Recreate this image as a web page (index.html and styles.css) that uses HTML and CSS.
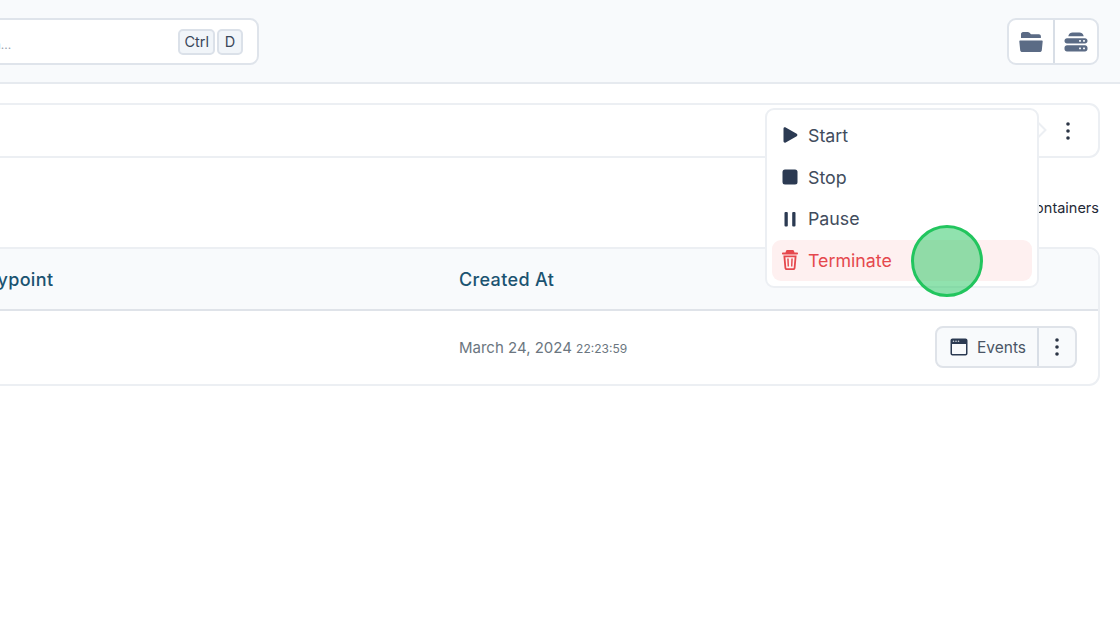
FILE: index.html
```html
<!DOCTYPE html>
<html lang="en">
<head>
<meta charset="utf-8">
<title>Containers</title>
<link rel="stylesheet" href="styles.css">
</head>
<body>
<div class="page">
  <header class="topbar">
    <div class="search">
      <span class="placeholder">Search...</span>
      <span class="keys"><kbd class="key">Ctrl</kbd><kbd class="key">D</kbd></span>
    </div>
    <div class="icon-group">
      <button class="icon-btn" aria-label="Files">
        <svg width="24" height="22" viewBox="0 0 24 22"><path class="slate" d="M2 3.200C2 2 2.900 1 4 1h4.800c.6 0 1.100.2 1.500.6l1.700 1.700h7.900c1.100 0 2 .9 2 2V7H2V3.200zM1 9.500h22c.4 0 .7.3.7.7l-.9 9c-.1 1.100-1 1.900-2.100 1.900H3.300c-1.100 0-2-.8-2.100-1.900l-.9-9c0-.4.300-.7.700-.7z"/></svg>
      </button>
      <button class="icon-btn" aria-label="Servers">
        <svg width="24" height="22" viewBox="0 0 24 22"><path class="slate" d="M4.500 4.500C5 2.700 6.700 1.500 8.500 1.500h7c1.800 0 3.500 1.200 4 3l.2.800H4.300l.2-.800zM3 7.200h18c1.400 0 2.500 1.100 2.500 2.500v.4c0 1.400-1.100 2.500-2.500 2.500H3C1.600 12.600.5 11.500.5 10.100v-.4C.5 8.300 1.600 7.200 3 7.200zM3 14.300h18c1.400 0 2.500 1.100 2.500 2.500v1.200c0 1.400-1.100 2.500-2.500 2.500H3C1.600 20.500.5 19.400.5 18v-1.200c0-1.400 1.100-2.500 2.500-2.500z"/><g class="holes"><rect x="15" y="9.100" width="2" height="1.700" rx=".5"/><rect x="19" y="9.100" width="2" height="1.700" rx=".5"/><rect x="15" y="16.600" width="2" height="1.700" rx=".5"/><rect x="19" y="16.600" width="2" height="1.700" rx=".5"/></g></svg>
      </button>
    </div>
  </header>

  <main class="content">
    <section class="toolbar-card">
      <button class="kebab" aria-label="More">
        <svg width="4" height="18" viewBox="0 0 4 18"><circle cx="2" cy="2" r="1.800"/><circle cx="2" cy="9" r="1.800"/><circle cx="2" cy="16" r="1.800"/></svg>
      </button>
    </section>

    <div class="count-row">Containers</div>

    <section class="table-card">
      <div class="table-head">
        <span class="col-entry">Entrypoint</span>
        <span class="col-created">Created At</span>
      </div>
      <div class="table-row">
        <span class="col-entry"></span>
        <span class="col-created date">March 24, 2024 <small class="time">22:23:59</small></span>
        <div class="row-actions">
          <button class="events-btn">
            <svg width="18" height="18" viewBox="0 0 18 18"><path class="navy" fill-rule="evenodd" d="M2.500.5h13c1.100 0 2 .9 2 2v13c0 1.100-.9 2-2 2h-13c-1.100 0-2-.9-2-2v-13c0-1.100.9-2 2-2zM2 6v9.500c0 .3.200.5.500.5h13c.3 0 .5-.2.500-.5V6H2z"/><g class="dots"><circle cx="3.500" cy="3.300" r=".8"/><circle cx="6" cy="3.300" r=".8"/><circle cx="8.500" cy="3.300" r=".8"/></g></svg>
            Events
          </button>
          <button class="row-kebab" aria-label="More">
            <svg width="4" height="18" viewBox="0 0 4 18"><circle cx="2" cy="2" r="1.800"/><circle cx="2" cy="9" r="1.800"/><circle cx="2" cy="16" r="1.800"/></svg>
          </button>
        </div>
      </div>
    </section>
  </main>

  <div class="menu-caret"></div>
  <nav class="menu">
    <a class="menu-item">
      <svg width="16" height="16" viewBox="0 0 16 16"><path class="navy" d="M1.500 1.700C1.500.5 2.700 0 3.700.5l11 6.300c.9.500.9 1.900 0 2.400l-11 6.300c-1 .5-2.200 0-2.200-1.200V1.700z"/></svg>
      Start
    </a>
    <a class="menu-item">
      <svg width="16" height="16" viewBox="0 0 16 16"><rect class="navy" x="0.500" y="0.500" width="15" height="15" rx="2.500"/></svg>
      Stop
    </a>
    <a class="menu-item">
      <svg width="16" height="16" viewBox="0 0 16 16"><rect class="navy" x="2.500" y="1" width="3.300" height="14.500" rx="1"/><rect class="navy" x="10.200" y="1" width="3.300" height="14.500" rx="1"/></svg>
      Pause
    </a>
    <a class="menu-item danger">
      <svg width="16" height="20" viewBox="0 0 16 20"><path class="red" fill-rule="evenodd" d="M5.500 0h5c.8 0 1.400.5 1.600 1.200l.4 1.300H15c.6 0 1 .4 1 1s-.4 1-1 1H1c-.6 0-1-.4-1-1s.4-1 1-1h2.500l.4-1.300C4.100.5 4.700 0 5.500 0zM1.400 5.500h13.200l-1.100 12.400c-.1 1.200-1 2.100-2.200 2.100H4.700c-1.200 0-2.100-.9-2.200-2.100L1.400 5.500zm2 1.800l.9 10.400c0 .3.300.6.600.6h6.200c.3 0 .6-.3.600-.6l.9-10.400H3.400zM5.200 8.500l1.500-.1.300 8-1.400.1-.4-8zm5.600 0l-1.500-.1-.3 8 1.400.1.400-8z"/></svg>
      Terminate
    </a>
  </nav>
  <div class="click-marker"></div>
</div>
</body>
</html>
```

FILE: styles.css
```css
* { box-sizing: border-box; }

html, body {
  margin: 0;
  height: 100%;
  background: #ffffff;
}

body {
  font-family: "Inter", "Open Sans", sans-serif;
  color: #1f2937;
  overflow: hidden;
}

.page {
  position: relative;
  width: 1120px;
  height: 626px;
  overflow: hidden;
}

.topbar {
  height: 84px;
  background: #f8fafc;
  border-bottom: 2px solid #e6eaef;
  padding: 18px 21px 0 0;
  display: flex;
  justify-content: space-between;
  align-items: flex-start;
}

.search {
  width: 300px;
  height: 47px;
  margin-left: -41px;
  background: #fff;
  border: 2px solid #dfe4eb;
  border-radius: 9px;
  display: flex;
  align-items: center;
  justify-content: space-between;
  padding: 0 14px 0 0;
}

.placeholder {
  font-size: 12px;
  color: #9aa3af;
  margin-top: 6px;
}

.keys { display: flex; gap: 2px; }

.key {
  font-family: inherit;
  font-size: 14.500px;
  color: #39475a;
  background: #f1f5f9;
  border: 2px solid #dbe1e9;
  border-radius: 5px;
  height: 26px;
  padding: 0 4px;
  min-width: 26px;
  display: flex;
  align-items: center;
  justify-content: center;
}

.icon-group {
  display: flex;
  height: 47px;
  background: #fff;
  border: 2px solid #dfe4eb;
  border-radius: 9px;
}

.icon-btn {
  width: 44px;
  padding: 0;
  background: none;
  border: 0;
  display: flex;
  align-items: center;
  justify-content: center;
}

.icon-btn + .icon-btn {
  width: 44px;
  border-left: 2px solid #d8dee6;
}

.slate { fill: #5b6b85; }
.holes { fill: #eef1f5; }
.navy { fill: #2b3a52; }
.dots { fill: #d5dae2; }
.red { fill: #e5484d; }

.content {
  padding: 19px 20px 0 0;
}

.toolbar-card {
  height: 55px;
  margin-left: -20px;
  background: #fff;
  border: 2px solid #eceff3;
  border-radius: 11px;
  display: flex;
  align-items: center;
  justify-content: flex-end;
  padding-right: 28px;
}

.kebab {
  display: flex;
  padding: 0;
  background: none;
  border: 0;
  fill: #2b3545;
}

.count-row {
  height: 89px;
  padding: 41px 1px 0 0;
  text-align: right;
  font-size: 14.500px;
  line-height: 18px;
  color: #1f2937;
}

.table-card {
  margin-left: -20px;
  height: 139px;
  background: #fff;
  border: 2px solid #eceff3;
  border-radius: 11px;
  overflow: hidden;
}

.table-head {
  height: 62px;
  background: #f8fafc;
  border-bottom: 2px solid #dfe3e9;
  display: flex;
  align-items: center;
  font-size: 18px;
  letter-spacing: 0.35px;
  font-weight: 500;
  color: #1b5371;
}

.table-row {
  height: 72px;
  display: flex;
  align-items: center;
}

.col-entry {
  width: 477px;
  text-indent: -21px;
}

.col-created { width: 476px; }

.date {
  font-size: 15px;
  color: #6b7680;
  white-space: nowrap;
}

.time {
  font-size: 12px;
}

.row-actions {
  display: flex;
  height: 42px;
  background: #f8fafc;
  border: 2px solid #dfe3e9;
  border-radius: 8px;
}

.events-btn {
  width: 100px;
  padding: 0 0 0 13px;
  background: none;
  border: 0;
  display: flex;
  align-items: center;
  gap: 9px;
  font-family: inherit;
  font-size: 15.500px;
  color: #4a5565;
}

.row-kebab {
  width: 38px;
  padding: 0;
  background: none;
  border: 0;
  border-left: 2px solid #d8dee6;
  display: flex;
  align-items: center;
  justify-content: center;
  fill: #2b3545;
}

/* Overlays */
.menu {
  position: absolute;
  left: 765px;
  top: 108px;
  width: 274px;
  height: 180px;
  background: #fff;
  border: 2px solid #eceff3;
  border-radius: 9px;
  padding: 4.500px 5px;
  display: flex;
  flex-direction: column;
}

.menu-caret {
  position: absolute;
  left: 1030px;
  top: 123px;
  width: 14px;
  height: 14px;
  background: #fff;
  border: 2px solid #eceff3;
  transform: rotate(45deg);
}

.menu-item {
  height: 41.700px;
  flex: none;
  display: flex;
  align-items: center;
  gap: 10px;
  padding-left: 10px;
  font-size: 17.800px;
  color: #414c5c;
  border-radius: 9px;
}

.menu-item.danger {
  color: #e5484d;
  background: #fef0f0;
}

.click-marker {
  position: absolute;
  left: 911px;
  top: 225px;
  width: 72px;
  height: 72px;
  border-radius: 50%;
  border: 3px solid #22c55e;
  background: rgba(34, 197, 94, 0.5);
}
```
